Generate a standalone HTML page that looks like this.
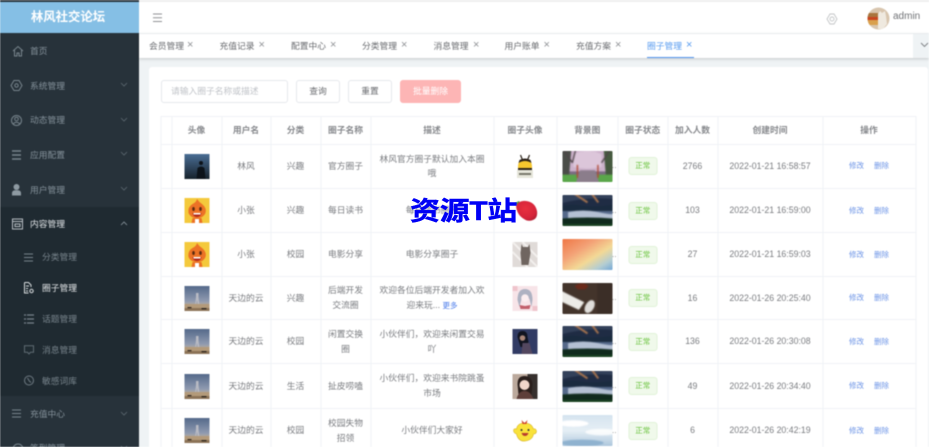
<!DOCTYPE html>
<html><head><meta charset="utf-8">
<style>
*{box-sizing:border-box;margin:0;padding:0}
html,body{width:929px;height:447px;overflow:hidden;background:#fff}
body{font-family:"Liberation Sans","Noto Sans CJK SC",sans-serif;position:relative}
#w{position:absolute;left:0;top:0;width:929px;height:447px;overflow:hidden;background:#eff3f5;filter:blur(.42px)}
.a{position:absolute}
#side{left:0;top:0;width:139px;height:447px;background:#27323a}
#logo{left:0;top:2px;width:139px;height:31px;background:#85bfe5;color:#fff;font-weight:bold;font-size:12.4px;line-height:31px;text-align:center;padding-right:3px}
#sub{left:0;top:207px;width:139px;height:189px;background:#1f2a31}
.m{position:absolute;left:30px;font-size:8.75px;line-height:12px;color:#84919a;white-space:nowrap}
.s{left:42px}
.ic{position:absolute;fill:none;stroke:#77848c;stroke-width:1}
.ar{position:absolute;left:119px;width:10px;height:6px;fill:none;stroke:#5c6971;stroke-width:.8}
#hd{left:139px;top:2px;width:790px;height:31px;background:#fff}
#top{left:0;top:0;width:929px;height:2px;background:#eeeeee}
#tabs{left:139px;top:34px;width:790px;height:24px;background:#fff;box-shadow:0 1px 3px rgba(0,0,0,.18)}
.t{position:absolute;top:40px;font-size:8.75px;line-height:12px;color:#6a6c70;white-space:nowrap}
.x{position:absolute;top:39px;font-size:11px;line-height:12px;color:#909296}
#card{left:149px;top:67px;width:779px;height:390px;background:#fff;border-radius:3px}
table{position:absolute;left:161px;top:116px;width:754px;border-collapse:collapse;table-layout:fixed;font-size:8.75px;color:#7a7c80;text-align:center;background:#fff;transform:translate(-.5px,0)}
td,th{border:1px solid #f0f2f6;vertical-align:middle;line-height:14.6px;padding:0 6px;overflow:hidden}
th{color:#86888c;font-weight:bold;font-size:8.75px}
.im{display:block;margin:0 auto;width:25px;height:25px}
.bg{display:block;width:50px;height:31px;border-radius:1px;margin-left:-1px}
.bg use{filter:blur(.6px)}
.bgc{padding:0 0 0 6px;position:relative;color:#888}
.bgc i{position:absolute;left:55px;top:50%;margin-top:-7px;font-style:normal;font-size:8px}
.tag{display:inline-block;width:29px;height:18px;line-height:16px;border:1px solid #e1f3d8;background:#f0f9eb;color:#67c23a;border-radius:3px;font-size:7.5px}
.op{color:#6b93e6;font-size:7.5px}
.op span{margin:0 5px;position:relative;top:.5px}
.more{color:#4a7bea;font-size:7.5px}
.btn{position:absolute;top:80px;height:23px;border:1px solid #e6e8ec;border-radius:3px;background:#fff;color:#6a6c70;font-size:8.75px;line-height:21px;text-align:center}
#wm{position:absolute;left:410px;top:194px;font-size:30px;line-height:36px;font-weight:bold;color:#0000f5;white-space:nowrap;letter-spacing:-.3px;-webkit-text-stroke:.5px #0000f5;transform:scaleY(.88);transform-origin:50% 50%}
</style></head>
<body><div id="w">
<svg width="0" height="0" style="position:absolute">
<defs>
<linearGradient id="g1" x1="0" y1="0" x2="0" y2="1"><stop offset="0" stop-color="#4a6d94"/><stop offset="1" stop-color="#16222c"/></linearGradient>
<symbol id="man" viewBox="0 0 25 25"><rect width="25" height="25" fill="url(#g1)"/><circle cx="16.500" cy="9" r="2" fill="#0c131a"/><path d="M12 25l1-11q3.500-3 7 0l1 11z" fill="#0c131a"/></symbol>
<symbol id="org" viewBox="0 0 25 25"><rect width="25" height="25" fill="#f4c93c"/><path d="M12.500 1q2 3 5 5 5 4 3.500 9-2 5-8.500 5T4 15Q3 9 8 6q4-2 4.500-5z" fill="#ec7226"/><ellipse cx="9" cy="11" rx="1.300" ry="2" fill="#5a2a10"/><ellipse cx="16" cy="11" rx="1.300" ry="2" fill="#5a2a10"/><path d="M8 15h9q-1 4-4.500 4T8 15z" fill="#b22a1a"/><path d="M9 15h7v1.500H9z" fill="#fff"/><path d="M8 20h9l1 5H7z" fill="#ec7226"/><rect x="10.500" y="21" width="4" height="4" fill="#fff"/></symbol>
<linearGradient id="g4" x1="0" y1="0" x2="0" y2="1"><stop offset="0" stop-color="#54698a"/><stop offset=".6" stop-color="#8f9ab0"/><stop offset=".72" stop-color="#a9a6a6"/></linearGradient>
<symbol id="sky" viewBox="0 0 25 25"><rect width="25" height="25" fill="url(#g4)"/><rect y="18" width="25" height="7" fill="#b39a7a"/><path d="M0 22h25v3H0z" fill="#8c7357"/><path d="M11.500 7h2.500v4l.8 7h-1.500l-.8-4-.8 4h-1l.8-7z" fill="#b8bac3"/><rect x="3" y="21" width="4" height="1.300" fill="#3b3027"/><rect x="17" y="22" width="5" height="1.300" fill="#2c241d"/></symbol>
<symbol id="sea" viewBox="0 0 50 31"><rect width="50" height="31" fill="#1f2c44"/><path d="M0 0h50v5q-25-3-50 4z" fill="#33415a"/><path d="M13 0l12 8M29 0l6 8" stroke="#a9754f" stroke-width="1.800" fill="none"/><path d="M0 12q10-3 20-1t30-1v6H0z" fill="#1a2b3f"/><path d="M0 16h50v8H0z" fill="#55698a"/><path d="M7 17q14-3 28 0t15 1v5H7z" fill="#b4c0d3"/><path d="M0 23q25-2 50 0v8H0z" fill="#102a1d"/><path d="M0 28h50v3H0z" fill="#1b4423"/></symbol>
<symbol id="cher" viewBox="0 0 50 31"><rect width="50" height="31" fill="#7a6a80"/><path d="M8 0h34v20H8z" fill="#cdb2cc"/><path d="M0 0h10l-2 24H0z" fill="#4a4d48"/><path d="M50 0H40l2 24h8z" fill="#45593f"/><path d="M12 4q13-6 26 0v12q-13 3-26 0z" fill="#dcc6da"/><path d="M3 0l8 12M14 0l-3 12M46 0l-8 12" stroke="#4d4447" stroke-width="1.200"/><path d="M0 23h17v8H0zM33 23h17v8H33z" fill="#5aa64a"/><path d="M18 19h14l4 12H14z" fill="#8b7d8b"/><rect x="15" y="14" width="1.300" height="12" fill="#b04a34"/><rect x="34" y="14" width="1.300" height="12" fill="#b04a34"/></symbol>
<linearGradient id="g2" x1="0" y1="0" x2="1" y2="1"><stop offset="0" stop-color="#ef7240"/><stop offset=".35" stop-color="#f3a176"/><stop offset=".6" stop-color="#f3d996"/><stop offset=".8" stop-color="#b4cdd2"/><stop offset="1" stop-color="#649fd8"/></linearGradient>
<symbol id="pol" viewBox="0 0 50 31"><rect width="50" height="31" fill="url(#g2)"/></symbol>
<symbol id="desk" viewBox="0 0 50 31"><rect width="50" height="31" fill="#43342b"/><path d="M0 8l22 11-5 7L0 18z" fill="#ecebe7"/><ellipse cx="27" cy="23" rx="4" ry="6.500" transform="rotate(30 27 23)" fill="#e0dedb"/><path d="M13 4q7-5 13 0l-3 3h-7z" fill="#6a2a1b"/><rect x="34" width="16" height="31" fill="#3b2e27"/></symbol>
<linearGradient id="g3" x1="0" y1="0" x2="0" y2="1"><stop offset="0" stop-color="#d4e3ef"/><stop offset=".5" stop-color="#e6eff5"/><stop offset="1" stop-color="#a9c4db"/></linearGradient>
<symbol id="cloud" viewBox="0 0 50 31"><rect width="50" height="31" fill="url(#g3)"/><ellipse cx="12" cy="9" rx="14" ry="3" fill="#fff"/><ellipse cx="38" cy="17" rx="15" ry="3" fill="#fff" opacity=".8"/><ellipse cx="20" cy="27" rx="20" ry="3" fill="#8fb2cf"/></symbol>
<symbol id="cat" viewBox="0 0 25 25"><rect width="25" height="25" fill="#e0dbd8"/><path d="M0 0l25 25M0 10l15 15M10 0l15 15" stroke="#f2efed" stroke-width="2"/><path d="M9 2l1.500 3h5L17 2l1 9-2 12H9L8 11z" fill="#6f6560"/></symbol>
<symbol id="girl" viewBox="0 0 25 25"><rect width="25" height="25" fill="#f7e4e8"/><path d="M5 14Q5 3 12.500 3T20 14l-1 7-2-8q-4-4-8 0l-2 8z" fill="#aeb2c2"/><circle cx="12.500" cy="12" r="3.800" fill="#fbeef0"/><path d="M7 19l5.500 1 5.500-1-1 4H8z" fill="#c2606c"/><path d="M0 0h5v5H0zM20 20h5v5h-5z" fill="#efc4cc"/></symbol>
<symbol id="wom" viewBox="0 0 25 25"><rect width="25" height="25" fill="#313b64"/><path d="M5 8q0-6 5-6t5 6l1 5-2 5H8z" fill="#111420"/><circle cx="10" cy="9" r="2.800" fill="#a98679"/><path d="M10 14h7l3 11H9z" fill="#53475f"/></symbol>
<symbol id="w2" viewBox="0 0 25 25"><rect width="25" height="25" fill="#bba99c"/><rect x="15" width="10" height="25" fill="#36302d"/><path d="M5 10q0-8 7-8t8 8l-1 11H6z" fill="#2a1f1c"/><circle cx="12" cy="11" r="5" fill="#f0d6ca"/><path d="M4 25q2-8 8-8t9 8z" fill="#5e3f3a"/></symbol>
<symbol id="duck" viewBox="0 0 25 25"><path d="M4 16q-3-1-3-4 1-2 3-1 1-6 8-6t9 6q2-1 3 2 0 3-3 3-1 6-8 7t-9-7z" fill="#f9e23a" stroke="#d8b52a" stroke-width=".6"/><path d="M9 2l3 3 3-3-1 4h-4z" fill="#d0452f"/><circle cx="9" cy="12" r="1" fill="#333"/><circle cx="16" cy="12" r="1" fill="#333"/><path d="M9 15h7q-1 3-3.500 3T9 15z" fill="#b83d2e"/></symbol>
<symbol id="bee" viewBox="0 0 25 25"><path d="M8 1l2 5M17 1l-2 5" stroke="#2a2118" stroke-width="1.200"/><path d="M5.500 13q0-8 7-8t7 8v3h-14z" fill="#f6c72e"/><path d="M6 9q6.500-4 13 0l-1-3q-5.500-3-11 0z" fill="#2a2118"/><path d="M5.500 14h14v2h-14z" fill="#2a2118"/><rect x="4.500" y="16" width="16" height="8" fill="#e6e6da"/><rect x="6.500" y="19" width="12" height="2" fill="#77776a"/></symbol>
</defs></svg>

<div class="a" id="top"></div>
<div class="a" id="side"></div>
<div class="a" id="sub"></div>
<div class="a" id="logo">林风社交论坛</div>

<svg class="ic" style="left:12px;top:45px" width="12" height="12" viewBox="0 0 12 12"><path d="M1 6l5-4.500L11 6M2.500 5v6h2.500V8h2v3h2.500V5"/></svg>
<div class="m" style="top:45px">首页</div>
<svg class="ic" style="left:10px;top:79px" width="13" height="13" viewBox="0 0 13 13"><path d="M4 1.500h5l3 5-3 5H4l-3-5z"/><circle cx="6.500" cy="6.500" r="1.700"/></svg>
<div class="m" style="top:80px">系统管理</div>
<svg class="ar" style="top:82px" viewBox="0 0 10 6"><path d="M2 1l3 3 3-3"/></svg>
<svg class="ic" style="left:10px;top:114px" width="13" height="13" viewBox="0 0 13 13"><circle cx="6.500" cy="6.500" r="5"/><circle cx="6.500" cy="5" r="1.800"/><path d="M3 10q3.500-3.500 7 0"/></svg>
<div class="m" style="top:114px">动态管理</div>
<svg class="ar" style="top:117px" viewBox="0 0 10 6"><path d="M2 1l3 3 3-3"/></svg>
<svg class="ic" style="left:12px;top:150px;stroke-width:1.400" width="12" height="10" viewBox="0 0 12 10"><path d="M0 1h9M0 5h9M0 9h9"/></svg>
<div class="m" style="top:149px">应用配置</div>
<svg class="ar" style="top:151px" viewBox="0 0 10 6"><path d="M2 1l3 3 3-3"/></svg>
<svg class="a" style="left:10px;top:183px" width="13" height="13" viewBox="0 0 13 13"><circle cx="6.500" cy="4" r="3" fill="#8e9aa2"/><path d="M2 12.500V10q0-2.500 3-2.800h3q3 .3 3 2.800v2.500z" fill="#8e9aa2"/></svg>
<div class="m" style="top:184px">用户管理</div>
<svg class="ar" style="top:186px" viewBox="0 0 10 6"><path d="M2 1l3 3 3-3"/></svg>
<svg class="ic" style="left:11px;top:218px;stroke:#b7bec3" width="13" height="12" viewBox="0 0 13 12"><path d="M1.500 1h10v10h-10zM1.500 3.500h10M4 6h5v2.500H4z"/></svg>
<div class="m" style="top:218px;color:#dfe3e6">内容管理</div>
<svg class="ar" style="top:221px;stroke:#8b979f" viewBox="0 0 10 6"><path d="M2 4l3-3 3 3"/></svg>

<svg class="ic" style="left:24px;top:253px" width="10" height="9" viewBox="0 0 10 9"><path d="M0 1h9M0 4.500h9M0 8h9"/></svg>
<div class="m s" style="top:251px;color:#78848c">分类管理</div>
<svg class="ic" style="left:24px;top:282px;stroke:#d9dddf" width="10" height="12" viewBox="0 0 10 12"><path d="M.5.500h4l2.500 2.500V5M.5.500v10.500h4M2 4h3M2 6.500h2M2 9h2"/><circle cx="7.500" cy="9" r="1.700"/></svg>
<div class="m s" style="top:282px;color:#e3e6e8">圈子管理</div>
<svg class="ic" style="left:24px;top:314px;stroke-width:1.200" width="10" height="10" viewBox="0 0 10 10"><path d="M0 1h2M3 1h7M0 5h2M3 5h7M0 9h2M3 9h7"/></svg>
<div class="m s" style="top:313px;color:#78848c">话题管理</div>
<svg class="ic" style="left:24px;top:345px;stroke:#5f6b73" width="10" height="10" viewBox="0 0 10 10"><path d="M.5.800h9v6.500H6.500L5 9 3.500 7.300h-3zM3 4h.1M5 4h.1M7 4h.1"/></svg>
<div class="m s" style="top:344px;color:#78848c">消息管理</div>
<svg class="ic" style="left:24px;top:375px;stroke:#6e7a82" width="10" height="11" viewBox="0 0 10 11"><circle cx="5" cy="5.500" r="4.500"/><path d="M3.500 3l1.800 3 1.700 1.500"/></svg>
<div class="m s" style="top:375px;color:#78848c">敏感词库</div>
<svg class="ic" style="left:12px;top:409px" width="10" height="9" viewBox="0 0 10 9"><path d="M0 1h9M0 4.500h9M0 8h9"/></svg>
<div class="m" style="top:408px">充值中心</div>
<svg class="ar" style="top:411px" viewBox="0 0 10 6"><path d="M2 1l3 3 3-3"/></svg>
<svg class="ic" style="left:12px;top:443px" width="12" height="12" viewBox="0 0 12 12"><circle cx="6" cy="6" r="5"/></svg>
<div class="m" style="top:442px">签到管理</div>
<svg class="ar" style="top:445px" viewBox="0 0 10 6"><path d="M2 1l3 3 3-3"/></svg>

<div class="a" id="hd"></div>
<svg class="a" style="left:152px;top:13px" width="11" height="10" viewBox="0 0 11 10" fill="none" stroke="#8f9194" stroke-width="1"><path d="M1 1h9M1 4.800h9M1 8.500h9"/></svg>
<svg class="a" style="left:826px;top:13px" width="12" height="12" viewBox="0 0 12 12" fill="none" stroke="#c3c5c7" stroke-width=".9"><path d="M4 1h4l3 5-3 5H4L1 6z"/><circle cx="6" cy="6" r="2"/></svg>
<svg class="a" style="left:867px;top:7px" width="23" height="23" viewBox="0 0 23 23"><defs><clipPath id="cc"><circle cx="11.500" cy="11.500" r="11"/></clipPath></defs><g clip-path="url(#cc)"><rect width="23" height="23" fill="#d8c5ae"/><path d="M0 6h11v4H0z" fill="#a9753e"/><path d="M0 10h11v3H0z" fill="#c9451f"/><path d="M0 13h12v5H0z" fill="#d9a04d"/><path d="M11 7l2-3 2 2 3-2 1 5 1 8-4 5h-5z" fill="#efe9df"/></g></svg>
<div class="a" style="left:893px;top:11px;font-size:10px;line-height:12px;color:#707276">admin</div>

<div class="a" id="tabs"></div>
<div class="t" style="left:149px">会员管理</div><div class="x" style="left:187px">×</div>
<div class="t" style="left:219.500px">充值记录</div><div class="x" style="left:258.500px">×</div>
<div class="t" style="left:291px">配置中心</div><div class="x" style="left:330px">×</div>
<div class="t" style="left:362px">分类管理</div><div class="x" style="left:401px">×</div>
<div class="t" style="left:433.500px">消息管理</div><div class="x" style="left:473px">×</div>
<div class="t" style="left:504.500px">用户账单</div><div class="x" style="left:543.500px">×</div>
<div class="t" style="left:576px">充值方案</div><div class="x" style="left:615px">×</div>
<div class="t" style="left:647px;color:#5b9df0">圈子管理</div><div class="x" style="left:686px;color:#5b9df0">×</div>
<div class="a" style="left:647px;top:56.500px;width:47px;height:1.500px;background:#4f94ee"></div>
<div class="a" style="left:913px;top:34px;width:16px;height:24px;background:#eff3f5"></div>
<svg class="a" style="left:920px;top:42px" width="9" height="6" viewBox="0 0 9 6" fill="none" stroke="#7d8084" stroke-width=".9"><path d="M1 1l3.500 3.500L8 1"/></svg>

<div class="a" id="card"></div>
<div class="a" style="left:161px;top:80px;width:127px;height:23px;border:1px solid #e6e8ec;border-radius:3px;background:#fff;color:#c0c3c8;font-size:8.75px;line-height:21px;padding-left:9px">请输入圈子名称或描述</div>
<div class="btn" style="left:296px;width:44px">查询</div>
<div class="btn" style="left:348px;width:44px">重置</div>
<div class="btn" style="left:400px;width:61px;background:#fdb5b5;border-color:#fdb5b5;color:#fff">批量删除</div>

<table>
<colgroup><col style="width:10.500px"><col style="width:50px"><col style="width:49px"><col style="width:50px"><col style="width:50px"><col style="width:123px"><col style="width:63px"><col style="width:61.500px"><col style="width:49.500px"><col style="width:50px"><col style="width:105px"><col style="width:93px"></colgroup>
<tr style="height:27.500px"><th></th><th>头像</th><th>用户名</th><th>分类</th><th>圈子名称</th><th>描述</th><th>圈子头像</th><th>背景图</th><th style="padding:0">圈子状态</th><th style="padding:0">加入人数</th><th>创建时间</th><th>操作</th></tr>
<tr style="height:44.500px"><td></td><td><svg class="im"><use href="#man"/></svg></td><td>林风</td><td>兴趣</td><td>官方圈子</td><td>林风官方圈子默认加入本圈哦</td><td><svg class="im"><use href="#bee"/></svg></td><td class="bgc"><svg class="bg"><use href="#cher" x="-2" y="-2" width="54" height="35"/></svg><i>..</i></td><td style="padding:0"><span class="tag">正常</span></td><td>2766</td><td>2022-01-21 16:58:57</td><td class="op"><span>修改</span><span>删除</span></td></tr>
<tr style="height:44px"><td></td><td><svg class="im"><use href="#org"/></svg></td><td>小张</td><td>兴趣</td><td>每日读书</td><td>每日读书圈子</td><td></td><td class="bgc"><svg class="bg"><use href="#sea" x="-2" y="-2" width="54" height="35"/></svg><i>..</i></td><td style="padding:0"><span class="tag">正常</span></td><td>103</td><td>2022-01-21 16:59:00</td><td class="op"><span>修改</span><span>删除</span></td></tr>
<tr style="height:44px"><td></td><td><svg class="im"><use href="#org"/></svg></td><td>小张</td><td>校园</td><td>电影分享</td><td>电影分享圈子</td><td><svg class="im"><use href="#cat"/></svg></td><td class="bgc"><svg class="bg"><use href="#pol" x="-2" y="-2" width="54" height="35"/></svg><i>..</i></td><td style="padding:0"><span class="tag">正常</span></td><td>27</td><td>2022-01-21 16:59:03</td><td class="op"><span>修改</span><span>删除</span></td></tr>
<tr style="height:43px"><td></td><td><svg class="im"><use href="#sky"/></svg></td><td>天边的云</td><td>兴趣</td><td>后端开发交流圈</td><td>欢迎各位后端开发者加入欢迎来玩... <span class="more">更多</span></td><td><svg class="im"><use href="#girl"/></svg></td><td class="bgc"><svg class="bg"><use href="#desk" x="-2" y="-2" width="54" height="35"/></svg><i>..</i></td><td style="padding:0"><span class="tag">正常</span></td><td>16</td><td>2022-01-26 20:25:40</td><td class="op"><span>修改</span><span>删除</span></td></tr>
<tr style="height:44px"><td></td><td><svg class="im"><use href="#sky"/></svg></td><td>天边的云</td><td>校园</td><td>闲置交换圈</td><td>小伙伴们，欢迎来闲置交易吖</td><td><svg class="im"><use href="#wom"/></svg></td><td class="bgc"><svg class="bg"><use href="#sea" x="-2" y="-2" width="54" height="35"/></svg><i>..</i></td><td style="padding:0"><span class="tag">正常</span></td><td>136</td><td>2022-01-26 20:30:08</td><td class="op"><span>修改</span><span>删除</span></td></tr>
<tr style="height:45px"><td></td><td><svg class="im"><use href="#sky"/></svg></td><td>天边的云</td><td>生活</td><td>扯皮唠嗑</td><td>小伙伴们，欢迎来书院跳蚤市场</td><td><svg class="im"><use href="#w2"/></svg></td><td class="bgc"><svg class="bg"><use href="#sea" x="-2" y="-2" width="54" height="35"/></svg><i>..</i></td><td style="padding:0"><span class="tag">正常</span></td><td>49</td><td>2022-01-26 20:34:40</td><td class="op"><span>修改</span><span>删除</span></td></tr>
<tr style="height:44px"><td></td><td><svg class="im"><use href="#sky"/></svg></td><td>天边的云</td><td>校园</td><td>校园失物招领</td><td>小伙伴们大家好</td><td><svg class="im"><use href="#duck"/></svg></td><td class="bgc"><svg class="bg"><use href="#cloud" x="-2" y="-2" width="54" height="35"/></svg><i>..</i></td><td style="padding:0"><span class="tag">正常</span></td><td>6</td><td>2022-01-26 20:42:19</td><td class="op"><span>修改</span><span>删除</span></td></tr>
</table>
</div>

<svg class="a" style="left:513px;top:198px;filter:blur(.5px)" width="26" height="26" viewBox="0 0 26 26"><defs><radialGradient id="sb" cx=".45" cy=".4" r=".7"><stop offset="0" stop-color="#e8303f"/><stop offset=".7" stop-color="#d5243a"/><stop offset="1" stop-color="#a81c30"/></radialGradient></defs><path d="M2 5l4-2 2 3-3 3z" fill="#4c9a3b"/><path d="M3 8q3-6 10-5 9 1 11 10 1 7-4 9-5 2-9-1Q4 17 3 8z" fill="url(#sb)"/></svg>
<div id="wm">资源T站</div>
</body></html>
